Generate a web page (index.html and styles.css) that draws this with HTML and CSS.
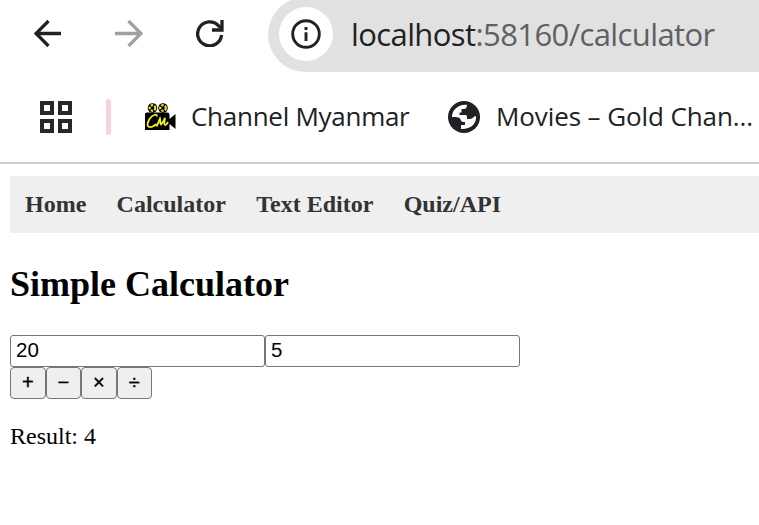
FILE: index.html
```html
<!DOCTYPE html>
<html lang="en">
<head>
<meta charset="utf-8">
<title>Calculator</title>
<link rel="stylesheet" href="styles.css">
</head>
<body>
<header class="chrome">
  <div class="toolbar">
    <svg class="tool back" width="28" height="28" viewBox="0 0 28 28"><path d="M27 14.500H2.500M14.500 2L2 14.500L14.500 27"/></svg>
    <svg class="tool forward" width="28" height="28" viewBox="0 0 28 28"><path d="M0 14.500H25.500M13.500 2L26 14.500L13.500 27"/></svg>
    <svg class="tool reload" width="28" height="28" viewBox="0 0 28 28"><path d="M25.6 16A12 12 0 1 1 22.3 6.500L25 9"/><path d="M26 1V11H16"/></svg>
    <div class="omnibox">
      <span class="info"><svg width="30" height="30" viewBox="0 0 30 30"><circle cx="15" cy="15" r="13.3"/><path d="M15 13.3V22M15 8V11"/></svg></span>
      <span class="url">localhost<span class="path">:58160/calculator</span></span>
    </div>
  </div>
  <div class="bookmarks">
    <svg class="apps" width="32" height="32" viewBox="0 0 32 32"><path d="M2 2h10v10H2zM20 2h10v10H20zM2 20h10v10H2zM20 20h10v10H20z"/></svg>
    <span class="divider"></span>
    <svg class="camera" width="32" height="30" viewBox="0 0 32 30">
      <circle cx="7.500" cy="6" r="4.800"/><circle cx="18" cy="6" r="4.800"/>
      <circle class="reel" cx="7.500" cy="6" r="2.800"/><circle class="reel" cx="18" cy="6" r="2.800"/>
      <path d="M0 12Q0 10.500 2 10.500H22Q24.500 10.500 24.500 12.500V17L30.500 12V27L24.500 22V28H0z"/>
      <path class="sign" d="M11.500 14.500C13 11.500 8 12 4.500 17C0 24.500 4 28 11.500 22M11.500 24.500C13 22 14 19 15 16.500C15.500 18 15 21 16 22.500C18 21 19 18 20 16C19.500 20 18.500 22.500 20 23Q21.500 23 23 20"/>
    </svg>
    <span class="label first">Channel Myanmar</span>
    <svg class="globe" width="32" height="32" viewBox="0 0 32 32"><circle cx="16" cy="16" r="16"/><path d="M19 3.800C19 6.500 18 8 16 8H13.500V11.500H11.500V14H17.500Q19 14 19 16V18H22C25 18 25.500 15 28 15C29 23 22 28.500 13 28V24H17V21C14 21 13 20.500 12.500 18.500C12 16.500 10 16 4 16C4 9 10 3 19 3.800z"/></svg>
    <span class="label second">Movies – Gold Chan...</span>
  </div>
</header>
<main class="page">
  <nav class="nav">
    <a>Home</a><a>Calculator</a><a>Text Editor</a><a>Quiz/API</a>
  </nav>
  <h2>Simple Calculator</h2>
  <div class="fields"><input value="20"><input value="5"></div>
  <div class="keys"><button>+</button><button>−</button><button>×</button><button>÷</button></div>
  <p>Result: 4</p>
</main>
</body>
</html>
```
FILE: styles.css
```css
* { box-sizing: border-box; }
body {
  margin: 0;
  height: 525px;
  overflow: hidden;
  background: #fff;
  color: #000;
  font-family: "Liberation Serif", serif;
}
.chrome {
  height: 164px;
  border-bottom: 2px solid #ccc;
  color: #202124;
  font-family: "Open Sans", sans-serif;
}
svg { display: block; flex: none; fill: none; }
.toolbar { display: flex; height: 72px; padding-left: 34px; }
.tool { margin-top: 19px; stroke: #202124; stroke-width: 3.3; }
.forward { margin-left: 53px; stroke: #a0a0a2; }
.reload { margin-left: 53px; }
.omnibox {
  display: flex;
  flex: 1;
  margin: -3px 0 0 44px;
  padding: 10px 0 0 11px;
  border-radius: 38px 0 0 38px;
  background: #e1e1e1;
}
.info {
  display: grid;
  place-items: center;
  flex: none;
  width: 54px;
  height: 54px;
  border-radius: 50%;
  background: #fff;
}
.info svg { stroke: #202124; stroke-width: 2.9; }
.url {
  margin: 5px 0 0 18px;
  font-size: 31px;
  line-height: 44px;
  letter-spacing: -0.6px;
  white-space: nowrap;
}
.path { color: #5f6063; }
.bookmarks { display: flex; align-items: center; height: 90px; padding-left: 40px; }
.apps { stroke: #27272c; stroke-width: 4; }
.divider { flex: none; width: 5px; height: 36px; margin: 0 34px; border-radius: 3px; background: #f5d3e5; }
.camera { fill: #000; }
.camera .reel { stroke: #e8e32b; stroke-width: 2.2; stroke-dasharray: 2.4 1.3; }
.camera .sign { fill: none; stroke: #f2ee22; stroke-width: 1.8; }
.label { font-size: 26px; line-height: 36px; padding-bottom: 2px; white-space: nowrap; }
.first { width: 217px; margin-left: 14px; letter-spacing: -0.27px; }
.second { margin-left: 16px; letter-spacing: -0.1px; }
.globe { margin-left: 40px; fill: #202124; }
.globe path { fill: #fff; }
.page { padding: 12px 0 0 10px; font-size: 24px; }
.nav {
  display: flex;
  gap: 30.3px;
  height: 57px;
  padding: 15px;
  background: #efefef;
  color: #333;
  font-weight: bold;
  line-height: 27px;
}
h2 { margin: 31px 0 30px; font-size: 36px; line-height: 41px; }
.fields, .keys { display: flex; height: 32px; }
input {
  width: 255px;
  height: 32px;
  padding: 0 4px 2px 5px;
  border: 1px solid #767676;
  border-radius: 3px;
  font: 20.5px "Liberation Sans", sans-serif;
}
button {
  width: 35.5px;
  height: 32px;
  padding: 0 0 2px;
  border: 1px solid #767676;
  border-radius: 4px;
  background: #efefef;
  color: #000;
  font: 20px "Liberation Sans", sans-serif;
  -webkit-text-stroke: 0.4px #000;
}
p { margin: 24px 0; line-height: 27px; }
```
